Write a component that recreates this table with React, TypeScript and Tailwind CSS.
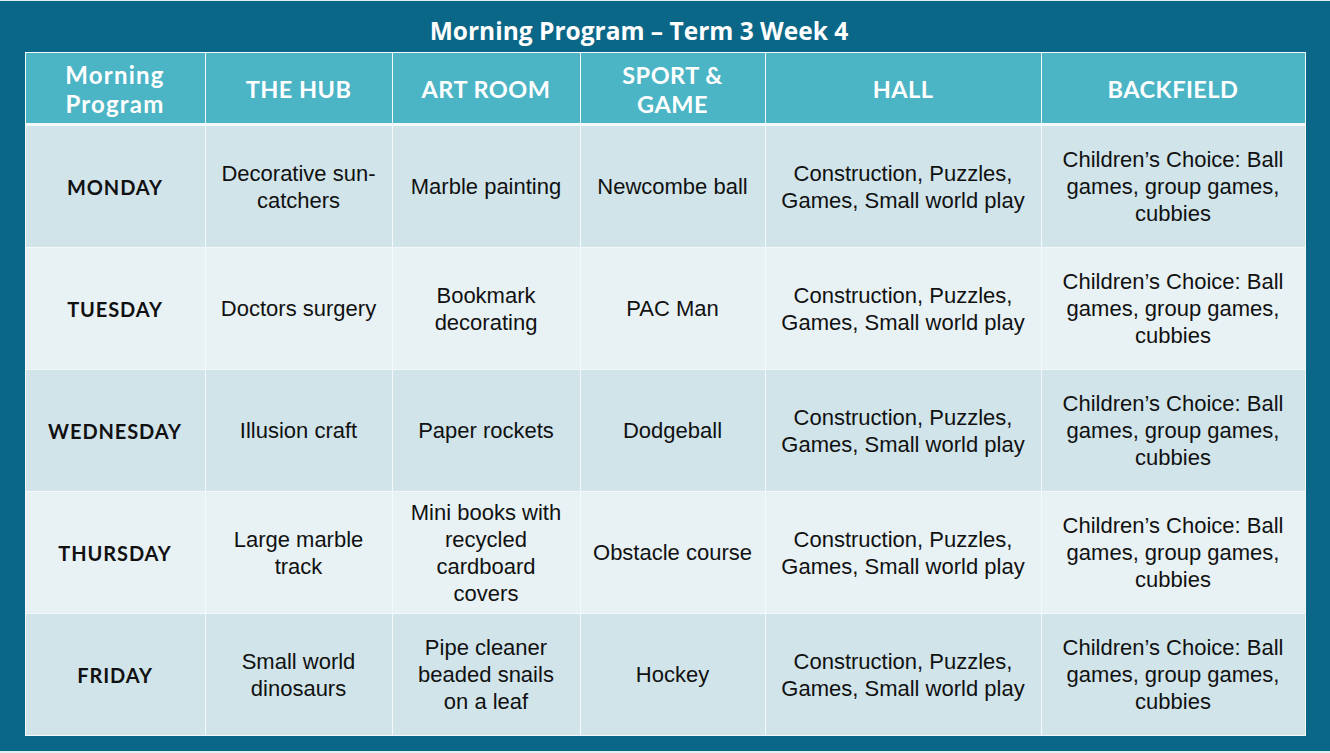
import { FC } from 'react';

interface DayRow {
  day: string;
  hub: string;
  art: string;
  sport: string;
  hall: string;
  backfield: string;
}

const hall = 'Construction, Puzzles, Games, Small world play';
const backfield = 'Children’s Choice: Ball games, group games, cubbies';

const rows: DayRow[] = [
  { day: 'MONDAY', hub: 'Decorative sun-catchers', art: 'Marble painting', sport: 'Newcombe ball', hall, backfield },
  { day: 'TUESDAY', hub: 'Doctors surgery', art: 'Bookmark decorating', sport: 'PAC Man', hall, backfield },
  { day: 'WEDNESDAY', hub: 'Illusion craft', art: 'Paper rockets', sport: 'Dodgeball', hall, backfield },
  { day: 'THURSDAY', hub: 'Large marble track', art: 'Mini books with recycled cardboard covers', sport: 'Obstacle course', hall, backfield },
  { day: 'FRIDAY', hub: 'Small world dinosaurs', art: 'Pipe cleaner beaded snails on a leaf', sport: 'Hockey', hall, backfield },
];

const headers = ['THE HUB', 'ART ROOM', 'SPORT & GAME', 'HALL', 'BACKFIELD'];

const cols = 'grid grid-cols-[179px_186px_187px_184px_275px_263px] gap-x-px';

const Cell: FC<{ text: string; bg: string; pad?: string }> = ({ text, bg, pad = 'px-3' }) => (
  <div className={`${bg} ${pad} h-[121px] flex items-center justify-center text-center text-[22px] leading-[27px] text-[#111] font-['Liberation_Sans',Arial,sans-serif]`}>
    {text}
  </div>
);

export default function App() {
  return (
    <div className="w-[1330px] h-[753px] bg-[#e3eef2] pt-px pb-[2px]">
      <div className="h-full bg-[#0b6787] flex flex-col items-center">
        <h1 className="h-[51px] flex items-center pt-[10px] mr-[52px] text-white text-[24.5px] font-bold font-['Open_Sans',sans-serif]">
          Morning Program – Term 3 Week 4
        </h1>
        <div className="bg-[#f3f8fa] p-px flex flex-col">
          <div className={cols}>
            <div className="bg-[#4cb5c5] h-[70px] flex items-center justify-center text-center pt-[2px] text-white text-[24px] leading-[29px] tracking-[0.05em] font-bold font-['Lato',sans-serif]">
              Morning
              <br />
              Program
            </div>
            {headers.map((h) => (
              <div
                key={h}
                className="bg-[#4cb5c5] h-[70px] flex items-center justify-center text-center px-5 pt-[3px] text-white text-[23.5px] leading-[29px] tracking-[0.02em] font-bold font-['Lato',sans-serif]"
              >
                {h}
              </div>
            ))}
          </div>
          <div className="h-[3px]" />
          <div className="flex flex-col gap-y-px">
            {rows.map((r, i) => {
              const bg = i % 2 === 0 ? 'bg-[#d0e4ea]' : 'bg-[#e8f2f5]';
              return (
                <div key={r.day} className={cols}>
                  <div className={`${bg} h-[121px] flex items-center justify-center text-[20px] font-bold tracking-[0.045em] text-[#111] font-['Lato',sans-serif]`}>
                    {r.day}
                  </div>
                  <Cell text={r.hub} bg={bg} />
                  <Cell text={r.art} bg={bg} />
                  <Cell text={r.sport} bg={bg} pad="px-2" />
                  <Cell text={r.hall} bg={bg} />
                  <Cell text={r.backfield} bg={bg} />
                </div>
              );
            })}
          </div>
        </div>
      </div>
    </div>
  );
}
